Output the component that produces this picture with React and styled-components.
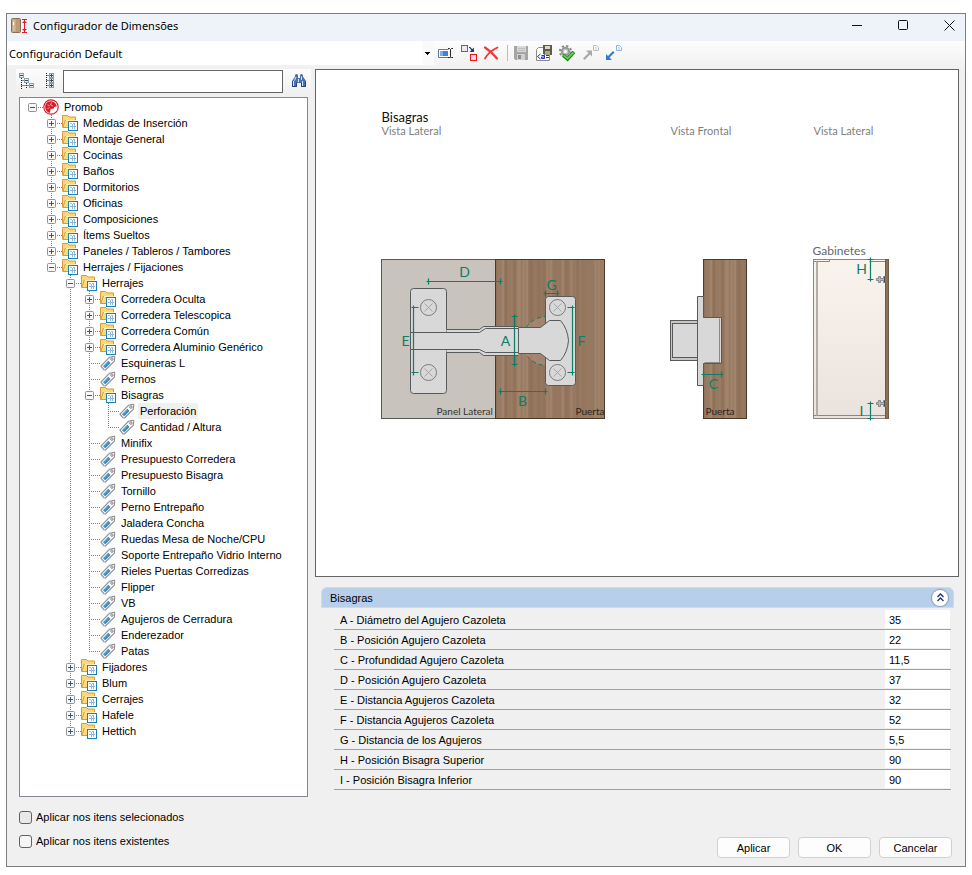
import React, { useState } from 'react'
import styled, { createGlobalStyle } from 'styled-components'

const tree = {
    name: 'Promob', icon: 'root', open: true, children: [
        { name: 'Medidas de Inserción', children: [] },
        { name: 'Montaje General', children: [] },
        { name: 'Cocinas', children: [] },
        { name: 'Baños', children: [] },
        { name: 'Dormitorios', children: [] },
        { name: 'Oficinas', children: [] },
        { name: 'Composiciones', children: [] },
        { name: 'Ítems Sueltos', children: [] },
        { name: 'Paneles / Tableros / Tambores', children: [] },
        {
            name: 'Herrajes / Fijaciones', open: true, children: [
                {
                    name: 'Herrajes', open: true, children: [
                        { name: 'Corredera Oculta', children: [] },
                        { name: 'Corredera Telescopica', children: [] },
                        { name: 'Corredera Común', children: [] },
                        { name: 'Corredera Aluminio Genérico', children: [] },
                        { name: 'Esquineras L' },
                        { name: 'Pernos' },
                        {
                            name: 'Bisagras', open: true, children: [
                                { name: 'Perforación' },
                                { name: 'Cantidad / Altura' },
                            ]
                        },
                        { name: 'Minifix' },
                        { name: 'Presupuesto Corredera' },
                        { name: 'Presupuesto Bisagra' },
                        { name: 'Tornillo' },
                        { name: 'Perno Entrepaño' },
                        { name: 'Jaladera Concha' },
                        { name: 'Ruedas Mesa de Noche/CPU' },
                        { name: 'Soporte Entrepaño Vidrio Interno' },
                        { name: 'Rieles Puertas Corredizas' },
                        { name: 'Flipper' },
                        { name: 'VB' },
                        { name: 'Agujeros de Cerradura' },
                        { name: 'Enderezador' },
                        { name: 'Patas' },
                    ]
                },
                { name: 'Fijadores', children: [] },
                { name: 'Blum', children: [] },
                { name: 'Cerrajes', children: [] },
                { name: 'Hafele', children: [] },
                { name: 'Hettich', children: [] },
            ]
        },
    ]
}

const properties = [
    ['A - Diámetro del Agujero Cazoleta', '35'],
    ['B - Posición Agujero Cazoleta', '22'],
    ['C - Profundidad Agujero Cazoleta', '11,5'],
    ['D - Posición Agujero Cazoleta', '37'],
    ['E - Distancia Agujeros Cazoleta', '32'],
    ['F - Distancia Agujeros Cazoleta', '52'],
    ['G - Distancia de los Agujeros', '5,5'],
    ['H - Posición Bisagra Superior', '90'],
    ['I - Posición Bisagra Inferior', '90'],
]

/* ---------- icons ---------- */

const Icon = ({ children, size = 16 }) => (
    <svg width={size} height={size} viewBox='0 0 16 16' aria-hidden='true'>{children}</svg>
)

const AppIcon = () => (
    <Icon>
        <rect x='.5' y='.5' width='9' height='14' rx='1' fill='#b99b76' stroke='#8a7050' />
        <rect x='1.500' y='1.500' width='3' height='12' fill='#d3bb9c' />
        <rect x='2' y='4' width='1' height='3' fill='#fff' />
        <path d='M11 1.500h5M11 14.500h5M13.500 1v14M11.500 4.500h4M11.500 11.500h4' fill='none' stroke='#e0182d' />
        <path d='M13.500 2l-1.500 2.500h3zM13.500 14l-1.500-2.500h3z' fill='#e0182d' />
    </Icon>
)

const PromobIcon = () => (
    <Icon>
        <circle cx='8' cy='8' r='7.200' fill='#fff' stroke='#d5202c' strokeWidth='1.200' />
        <path d='M7.500 2.200C4 2.300 2 5 2.200 8.200 2.400 11.500 5 13.700 7 13.800l.600-3.800 2.900-.300.800-1.700 2.400-.500C13.500 4.500 11 2.200 7.500 2.200z' fill='#d5202c' />
        <path d='M8.500 3.500l-1 2.500 2.500 1M4.500 6l2 .500M4.500 9.500l2-1' fill='none' stroke='#f6b8bb' strokeWidth='.800' />
    </Icon>
)

const FolderIcon = () => (
    <Icon>
        <path d='M.500 12.500v-12h5l1.500 1.500h6.500v10.500z' fill='#fbd878' stroke='#d59a3c' />
        <path d='M1.500 11.500L4 5.500h10' fill='none' stroke='#fff0b8' />
        <path d='M1 12l2.500-7' stroke='#d59a3c' />
        <rect x='6' y='6' width='10' height='10' fill='#1b7fb5' />
        <rect x='7' y='7' width='8' height='8' fill='#fff' />
        <path d='M8 8.500h2M11 8.500h2' stroke='#f0b445' />
        <path d='M8 11.500h6M10.500 9v5M12.500 9v5' stroke='#8fb9dd' />
    </Icon>
)

const TagIcon = () => (
    <Icon>
        <path d='M.900 11.200L9.600 2.200l4.600-1 .600.600-.600 4.600-8.800 8.600-1.600-.300z' fill='#fafafa' stroke='#8d8d8d' strokeWidth='1.100' strokeLinejoin='round' />
        <path d='M3 11.300l5.300-5.500 2.200 2.200-5.300 5.300z' fill='#2e86c1' />
        <path d='M4.300 11.200l4.200-4.200' stroke='#79bde8' strokeWidth='.900' />
        <circle cx='11.900' cy='4.100' r='1.200' fill='#fff' stroke='#777' strokeWidth='.900' />
    </Icon>
)

const TinyBox = ({ x, y, plus }) => (
    <g transform={`translate(${x} ${y})`}>
        <rect x='.5' y='.5' width='4' height='4' fill='#eaf1f5' stroke='#8ba0ad' />
        <path d={plus ? 'M1 2.500h3M2.500 1v3' : 'M1 2.500h3'} stroke='#33475b' />
    </g>
)

const CollapseIcon = () => (
    <Icon>
        <path d='M2.500 5v11M2.500 7.500h3M7.500 10v5M2.500 12.500h8' fill='none' stroke='#222' strokeDasharray='1 1' />
        <TinyBox x={0} y={0} /><TinyBox x={5} y={5} /><TinyBox x={10} y={10} />
    </Icon>
)

const ExpandIcon = () => (
    <Icon>
        <path d='M4.500 0v15M4.500 2.500h3M4.500 7.500h3M4.500 12.500h3' fill='none' stroke='#222' strokeDasharray='1 1' />
        <TinyBox x={7} y={0} plus /><TinyBox x={7} y={5} plus /><TinyBox x={7} y={10} plus />
    </Icon>
)

const BinocularsIcon = () => (
    <Icon>
        <path d='M4.500 1.500h2l.500 2v1.500h2V3.500l.500-2h2l.500 2 3 4.500v6h-5v-4H6v4H1V8l3-4.500z' fill='#4a72b0' />
        <path d='M2.500 8v5M5 4L3.500 7.500M11.500 8v5M10.500 3.500V7M7.500 6v3' stroke='#d5e3f6' />
        <path d='M1.500 8.500v5h4v-4M14.500 8.500v5h-4v-4M4.500 2h2M9.500 2h2' fill='none' stroke='#24437c' />
    </Icon>
)

const RenameIcon = () => (
    <Icon>
        <path d='M11.500 4.500H1.500v8h12.500' fill='#fff' stroke='#5f7896' />
        <rect x='3' y='6' width='8' height='5' fill='#3f80dd' />
        <rect x='3' y='6' width='3' height='5' fill='#7fadec' />
        <path d='M11 3.500h1.500l1 1 1-1H16M13.500 4.500v7M11 12.500h1.500l1-1 1 1H16' fill='none' stroke='#222' />
    </Icon>
)

const SwapIcon = () => (
    <Icon>
        <rect x='1.500' y='.5' width='6' height='6' fill='#ece8ee' stroke='#6f6672' />
        <rect x='10.500' y='9.500' width='6' height='6' fill='#f6dcdc' stroke='#e81515' />
        <path d='M9 2.500h1l2.500 3' fill='none' stroke='#1c3c78' strokeWidth='1.200' />
        <path d='M14 2.500v4.500H9.500z' fill='#1c3c78' />
    </Icon>
)

const DeleteIcon = () => (
    <Icon>
        <path d='M2 2.500C6 5 10.500 9 14 13.500' fill='none' stroke='#f53333' strokeWidth='2.200' strokeLinecap='round' />
        <path d='M14.500 2.500C9 5 4.500 9 2 13.500' fill='none' stroke='#f53333' strokeWidth='1.800' strokeLinecap='round' />
    </Icon>
)

const SaveIcon = () => (
    <Icon>
        <path d='M1 1h14v14H2.500L1 13.500z' fill='#a5a5a5' />
        <rect x='4' y='1' width='9' height='6' fill='#d9d9d9' />
        <path d='M5 3.500h7M5 5.500h7' stroke='#bcbcbc' />
        <rect x='4' y='9' width='8' height='6' fill='#d0d0d0' />
        <rect x='5' y='10' width='3' height='4' fill='#8f8f8f' />
    </Icon>
)

const SaveAsIcon = () => (
    <Icon>
        <path d='M.500 15.500V4.500l2-2h11v13z' fill='#fdfdfd' stroke='#8c8c8c' />
        <path d='M7 0h9v10H8.500L7 8.500z' fill='#5d5d48' />
        <rect x='9' y='1' width='5' height='3' fill='#d9d9c8' />
        <rect x='9' y='6' width='5' height='4' fill='#a8a890' />
        <path d='M4.500 9L1.500 11.500l3 2.500M5.500 10.500h3v3h-3v-1.500h3M10 10.500h3M10 12.500h3' fill='none' stroke='#1f2fd0' />
    </Icon>
)

const GearCheckIcon = () => (
    <Icon>
        <circle cx='6.500' cy='6.500' r='5.600' fill='none' stroke='#8b8b8b' strokeWidth='2' strokeDasharray='2.200 2.200' />
        <circle cx='6.500' cy='6.500' r='3.700' fill='#c4c4c4' stroke='#979797' strokeWidth='2' />
        <circle cx='6.500' cy='6.500' r='1.500' fill='#fff' />
        <path d='M4 10l4.500 4L15 7' fill='none' stroke='#237a1c' strokeWidth='3.400' />
        <path d='M4.500 10.300l4 3.200 6-6' fill='none' stroke='#59d445' strokeWidth='1.800' />
    </Icon>
)

const ArrowPage = ({ color, page, flip }) => (
    <Icon>
        {flip
            ? <path d='M1 15V9l2 2 5-5 1.500 1.500-5 5L7 15z' fill={color} />
            : <path d='M10 5.500v6L8 9.500l-5.500 5.500L1 13.500 6.500 8l-2.500-2.500z' fill={color} />}
        <path d='M11.500.500h3l2 2v3h-5z' fill='#fff' stroke={page} />
        <path d='M13 2.500h1.500M13 4h2' stroke={page} strokeWidth='.800' />
    </Icon>
)

/* ---------- hinge drawing ---------- */

const GREEN = '#0e7c66'
const EDGE = '#58595b'

// stripes are pseudo random but stable between renders
const Wood = ({ x, y, width, height }) => {
    const tones = ['#846a52', '#a88b6e', '#937660', '#9e8065', '#8b6e57', '#ac9077', '#967a62']
    const stripes = []
    for (let i = 0; i < width; i += 3) {
        stripes.push(
            <rect key={i} x={x + i} y={y} width={Math.min(1 + (i * 7) % 4, width - i)} height={height}
                fill={tones[(i * 5 + (i * i) % 11) % 7]} opacity='.5' />
        )
    }
    return (
        <g>
            <rect x={x} y={y} width={width} height={height} fill='#967860' />
            {stripes}
            <rect x={x} y={y} width={width} height={height} fill='none' stroke='#4a3a2c' />
        </g>
    )
}

const Screw = ({ cx, cy }) => (
    <g>
        <circle cx={cx} cy={cy} r='8' fill='#d8d8d9' stroke='#7b7b7d' />
        <path d={`M${cx - 4} ${cy - 4}l8 8M${cx + 4} ${cy - 4}l-8 8`} stroke='#a6a6a8' />
    </g>
)

const HDim = ({ y, from, to }) => (
    <path d={`M${from - 2} ${y}H${to + 2}M${from} ${y - 3}v6M${to} ${y - 3}v6`} stroke={GREEN} strokeWidth='1.200' />
)

const VDim = ({ x, from, to }) => (
    <path d={`M${x} ${from - 2}V${to + 2}M${x - 3} ${from}h6M${x - 3} ${to}h6`} stroke={GREEN} strokeWidth='1.200' />
)

const SideHinge = ({ y }) => (
    <g>
        <path d={`M876 ${y - 1}h2v-2h2v2h3v-2h2v6h-2v-2h-3v2h-2v-2h-2z`} fill='#b9b9bb' stroke='#77777a' strokeWidth='.8' />
        <path d={`M884 ${y - 3}v6`} stroke='#4f4f51' />
    </g>
)

const HingeDrawing = () => (
    <Drawing viewBox='0 0 642 506' preserveAspectRatio='xMinYMin meet' role='img' aria-label='Bisagras'>
        <g transform='translate(-315.5 -69.5)'>
            <Caption x='381' y='121' size={13} fill='#111'>Bisagras</Caption>
            <Caption x='381' y='134' size={11}>Vista Lateral</Caption>
            <Caption x='670' y='134' size={11}>Vista Frontal</Caption>
            <Caption x='813' y='134' size={11}>Vista Lateral</Caption>

            {/* side view, hinge open over panel and door */}
            <rect x='381' y='259' width='114' height='159' fill='#c8c3bc' stroke={EDGE} />
            <Wood x={495} y={259} width={109} height={159} />
            <circle cx='546' cy='340.500' r='24.500' fill='#b09580' fillOpacity='.5' stroke={GREEN} strokeDasharray='4 3' />
            <rect x='410' y='288' width='36' height='105' rx='3' fill='#d8d8d9' stroke={EDGE} />
            <rect x='545' y='296' width='30' height='89' rx='3' fill='#d8d8d9' stroke={EDGE} />
            <path d='M446 329h33l4-3h35v29h-35l-4-3h-33z' fill='#d8d8d9' />
            <path d='M446 329h33l4-3h35M446 352h33l4 3h35' fill='none' stroke={EDGE} />
            <path d='M518 327h22l9-7h11q7 8 8 20-1 12-8 20h-11l-9-7h-22z' fill='#d8d8d9' stroke={EDGE} />
            <path d='M410 332h69l6-4h33v24h-33l-6-3h-69z' fill='#d8d8d9' stroke={EDGE} />
            <Screw cx={428} cy={307} />
            <Screw cx={428} cy={372} />
            <Screw cx={557} cy={307} />
            <Screw cx={557} cy={372} />
            <HDim y={281} from={428} to={500} />
            <HDim y={293} from={545} to={557} />
            <HDim y={391} from={500} to={545} />
            <VDim x={514} from={316} to={364} />
            <path d='M413 305v70M411 307h7M411 372h7M572 305v70M567 307h7M567 372h7' stroke={GREEN} strokeWidth='1.200' />
            <Letter x='464' y='276'>D</Letter>
            <Letter x='551' y='289'>G</Letter>
            <Letter x='405' y='345'>E</Letter>
            <Letter x='505' y='345'>A</Letter>
            <Letter x='581' y='345'>F</Letter>
            <Letter x='522' y='405'>B</Letter>
            <Caption x='436' y='414' size={10} fill='#333'>Panel Lateral</Caption>
            <Caption x='575' y='414' size={10} fill='#2d2620'>Puerta</Caption>

            {/* front view, cup sunk in the door */}
            <Wood x={703} y={259} width={43} height={159} />
            <rect x='670' y='320' width='28' height='40' fill='#c9c7c0' stroke={EDGE} />
            <rect x='672' y='323' width='26' height='34' fill='#d8d8d9' stroke={EDGE} />
            <path d='M697 296h6v21h18v46h-18v22h-6z' fill='#d8d8d9' stroke={EDGE} />
            <path d='M719 318v44M704 362h16' stroke='#8a8a8c' />
            <HDim y={374} from={703} to={721} />
            <Letter x='713' y='388'>C</Letter>
            <Caption x='705' y='414' size={10} fill='#2d2620'>Puerta</Caption>

            {/* cabinet with both hinges */}
            <Caption x='812' y='254' size={12} fill='#666'>Gabinetes</Caption>
            <defs>
                <linearGradient id='cabinet' x1='0' y1='0' x2='0' y2='1'>
                    <stop offset='0' stopColor='#f9f3ee' />
                    <stop offset='1' stopColor='#eae2dd' />
                </linearGradient>
            </defs>
            <rect x='813' y='259' width='72' height='159' fill='url(#cabinet)' stroke='#8b8680' />
            <path d='M813 261h16v-2M869 261h16M813 415h72' fill='none' stroke='#8b8680' />
            <path d='M816.500 261v154' stroke='#b4ada5' strokeWidth='2' />
            <rect x='885' y='259' width='3' height='159' fill='#8a7257' stroke='#6d5c49' />
            <SideHinge y={279} />
            <SideHinge y={403} />
            <VDim x={870} from={259} to={279} />
            <VDim x={870} from={403} to={418} />
            <Letter x='861' y='273'>H</Letter>
            <Letter x='861' y='415'>I</Letter>
        </g>
    </Drawing>
)

/* ---------- tree ---------- */

const TreeNode = ({ node, depth = 0, trail = [], last = true, selected, onSelect }) => {
    const [open, setOpen] = useState(!!node.open)
    const folder = !!node.children
    const kids = open && folder ? node.children : []
    return (
        <li role='treeitem' aria-expanded={folder ? open : undefined} aria-selected={selected === node.name}>
            <TreeRow>
                {trail.map((line, i) => <Guide key={i} $line={line} />)}
                <Elbow $root={depth === 0} $last={last}>
                    {folder && (
                        <Expander aria-label={open ? 'Contraer' : 'Expandir'} onClick={() => setOpen(!open)}>
                            <svg width='9' height='9' viewBox='0 0 9 9'>
                                <rect x='.5' y='.5' width='8' height='8' rx='1' fill='#f7f7f7' stroke='#919191' />
                                <path d={open ? 'M2 4.500h5' : 'M2 4.500h5M4.500 2v5'} stroke='#33509a' />
                            </svg>
                        </Expander>
                    )}
                </Elbow>
                <NodeIcon>
                    {node.icon === 'root' ? <PromobIcon /> : folder ? <FolderIcon /> : <TagIcon />}
                </NodeIcon>
                <NodeLabel $selected={selected === node.name} onClick={() => onSelect(node.name)}>{node.name}</NodeLabel>
            </TreeRow>
            {kids.length > 0 && (
                <TreeList role='group'>
                    {kids.map((kid, i) => (
                        <TreeNode key={kid.name} node={kid} depth={depth + 1} trail={[...trail, !last]}
                            last={i === kids.length - 1} selected={selected} onSelect={onSelect} />
                    ))}
                </TreeList>
            )}
        </li>
    )
}

const App = () => {
    const [selected, setSelected] = useState('Perforación')
    const [collapsed, setCollapsed] = useState(false)

    return (
        <>
            <GlobalStyle />
            <Window>
                <TitleBar>
                    <AppIcon />
                    <Title>Configurador de Dimensões</Title>
                    <WindowButton aria-label='Minimizar'>
                        <svg width='11' height='11'><path d='M0 5.500h10' stroke='#111' /></svg>
                    </WindowButton>
                    <WindowButton aria-label='Maximizar'>
                        <svg width='11' height='11'><rect x='.5' y='.5' width='9' height='9' rx='1' fill='none' stroke='#111' /></svg>
                    </WindowButton>
                    <WindowButton aria-label='Cerrar'>
                        <svg width='11' height='11'><path d='M.500.500l10 10M10.500.500l-10 10' stroke='#111' /></svg>
                    </WindowButton>
                </TitleBar>

                <Toolbar>
                    <ConfigSelect aria-label='Configuración'>
                        <option>Configuración Default</option>
                    </ConfigSelect>
                    <ToolButton aria-label='Renombrar'><RenameIcon /></ToolButton>
                    <ToolButton aria-label='Duplicar'><SwapIcon /></ToolButton>
                    <ToolButton aria-label='Eliminar'><DeleteIcon /></ToolButton>
                    <Separator />
                    <ToolButton aria-label='Guardar' disabled><SaveIcon /></ToolButton>
                    <ToolButton aria-label='Guardar como'><SaveAsIcon /></ToolButton>
                    <ToolButton aria-label='Validar'><GearCheckIcon /></ToolButton>
                    <ToolButton aria-label='Exportar' disabled><ArrowPage color='#a8a8a8' page='#bdbdbd' /></ToolButton>
                    <ToolButton aria-label='Importar'><ArrowPage color='#3579cf' page='#8ab4e6' flip /></ToolButton>
                </Toolbar>

                <Content>
                    <Sidebar>
                        <SearchBar>
                            <ToolButton aria-label='Contraer todo'><CollapseIcon /></ToolButton>
                            <ToolButton aria-label='Expandir todo'><ExpandIcon /></ToolButton>
                            <SearchInput type='text' aria-label='Buscar' />
                            <ToolButton aria-label='Buscar'><BinocularsIcon /></ToolButton>
                        </SearchBar>
                        <TreeBox>
                            <TreeList role='tree'>
                                <TreeNode node={tree} selected={selected} onSelect={setSelected} />
                            </TreeList>
                        </TreeBox>
                    </Sidebar>

                    <Details>
                        <Canvas>
                            <HingeDrawing />
                        </Canvas>
                        <Group>
                            <GroupHeader>
                                <GroupTitle>Bisagras</GroupTitle>
                                <CollapseButton aria-label='Contraer grupo' onClick={() => setCollapsed(!collapsed)}>
                                    <svg width='9' height='9' viewBox='0 0 9 9'>
                                        <path d='M1.500 4l3-3 3 3M1.500 8l3-3 3 3' fill='none' stroke='#1f2f6b' strokeWidth='1.300' />
                                    </svg>
                                </CollapseButton>
                            </GroupHeader>
                            {!collapsed && (
                                <PropertyTable>
                                    <tbody>
                                        {properties.map(([label, value], i) => (
                                            <PropertyRow key={label}>
                                                <th scope='row'><label htmlFor={'prop-' + i}>{label}</label></th>
                                                <td><ValueInput id={'prop-' + i} defaultValue={value} /></td>
                                            </PropertyRow>
                                        ))}
                                    </tbody>
                                </PropertyTable>
                            )}
                        </Group>
                    </Details>
                </Content>

                <Footer>
                    <Checks>
                        <CheckLabel $dim><input type='checkbox' />Aplicar nos itens selecionados</CheckLabel>
                        <CheckLabel><input type='checkbox' />Aplicar nos itens existentes</CheckLabel>
                    </Checks>
                    <Actions>
                        <ActionButton>Aplicar</ActionButton>
                        <ActionButton>OK</ActionButton>
                        <ActionButton>Cancelar</ActionButton>
                    </Actions>
                </Footer>
            </Window>
        </>
    )
}

const GlobalStyle = createGlobalStyle`
    * {
        box-sizing: border-box;
    }
    body {
        margin: 0;
        padding: 13px 6px 8px;
        background: #ffffff;
        color: #000000;
        font: 11px/14px "Liberation Sans", Arial, sans-serif;
    }
    button, input, select {
        font: inherit;
        color: inherit;
    }
    svg {
        display: block;
        flex: none;
        overflow: visible;
    }
`;

const Window = styled.div`
    display: flex;
    flex-direction: column;
    min-height: calc(100vh - 21px);
    background: #f0f0f0;
    border: 1px solid #7c7f82;
`;

const TitleBar = styled.header`
    display: flex;
    align-items: center;
    height: 27px;
    padding-left: 4px;
    padding-bottom: 4px;
    background: #eef3f9;
`;

const Title = styled.h1`
    flex: 1;
    margin: 0 0 0 6px;
    font: 400 11px/16px "Noto Sans", sans-serif;
`;

const PlainButton = styled.button`
    display: flex;
    align-items: center;
    justify-content: center;
    padding: 0;
    border: none;
    background: none;
`;

const WindowButton = styled(PlainButton)`
    width: 32px;
    height: 22px;
    & + & {
        margin-left: 14px;
    }
`;

const Toolbar = styled.div`
    display: flex;
    align-items: center;
    height: 28px;
    padding-bottom: 4px;
    background: linear-gradient(#fdfdfd, #f0f0f0);
`;

const ConfigSelect = styled.select`
    width: 427px;
    height: 24px;
    padding: 1px 0 0 2px;
    border: none;
    border-radius: 0;
    appearance: none;
    font: 11px/16px "Noto Sans", sans-serif;
    background:
        linear-gradient(#000, #000) 418px 11px / 5px 1px no-repeat,
        linear-gradient(#000, #000) 419px 12px / 3px 1px no-repeat,
        linear-gradient(#000, #000) 420px 13px / 1px 1px no-repeat,
        linear-gradient(#fafafa, #fafafa) 415px 0 / 12px 24px no-repeat,
        #ffffff;
`;

const ToolButton = styled(PlainButton)`
    flex: none;
    justify-content: flex-start;
    width: 23px;
    height: 24px;
    padding-left: 3px;
`;

const Separator = styled.span`
    width: 1px;
    height: 16px;
    margin: 0 2px 0 4px;
    background: #bdbdbd;
`;

const Content = styled.main`
    flex: 1;
    display: flex;
    gap: 4px;
    padding: 0 6px 0 9px;
`;

const Sidebar = styled.section`
    display: flex;
    flex-direction: column;
    gap: 4px;
    width: 295px;
`;

const SearchBar = styled.div`
    display: flex;
    align-items: center;
    height: 24px;
    background: linear-gradient(#fcfcfc, #f0f0f0);
`;

const SearchInput = styled.input`
    flex: 1;
    min-width: 0;
    height: 23px;
    margin: 0 5px 0 1px;
    padding: 0 4px;
    border: 1px solid #646464;
    background: #ffffff;
`;

const TreeBox = styled.div`
    flex: 1;
    margin: 0 3px;
    padding: 1px 3px;
    border: 1px solid #828790;
    background: #ffffff;
`;

const TreeList = styled.ul`
    margin: 0;
    padding: 0;
    list-style: none;
`;

const TreeRow = styled.div`
    display: flex;
    height: 16px;
`;

const Guide = styled.span`
    width: 19px;
    background: repeating-linear-gradient(${({ $line }) => ($line ? '#808080' : 'transparent')} 0 1px, transparent 1px 2px) 9px 0 / 1px 100% no-repeat;
`;

const Elbow = styled.span`
    display: flex;
    align-items: center;
    padding-left: 5px;
    width: 20px;
    background:
        repeating-linear-gradient(90deg, #808080 0 1px, transparent 1px 2px) 9px 8px / 11px 1px no-repeat,
        repeating-linear-gradient(#808080 0 1px, transparent 1px 2px) 9px 0 / 1px ${({ $root, $last }) => ($root ? '0' : $last ? '8px' : '100%')} no-repeat;
`;

const Expander = styled(PlainButton)`
    width: 9px;
    height: 9px;
`;

const NodeIcon = styled.span`
    width: 16px;
    margin-right: 3px;
`;

const NodeLabel = styled.button`
    padding: 0 2px;
    border: none;
    line-height: 16px;
    white-space: nowrap;
    background: ${({ $selected }) => ($selected ? '#f0f0f0' : 'none')};
`;

const Details = styled.section`
    flex: 1;
    min-width: 0;
    display: flex;
    flex-direction: column;
    gap: 10px;
    padding-bottom: 7px;
`;

const Canvas = styled.div`
    flex: 1;
    border: 1px solid #646464;
    background: #ffffff;
`;

const Drawing = styled.svg`
    width: 100%;
    height: auto;
`;

const Caption = styled.text`
    font-family: Lato, sans-serif;
    font-size: ${({ size }) => size}px;
    fill: ${({ fill }) => fill || '#808080'};
`;

const Letter = styled.text`
    font-family: Lato, sans-serif;
    font-size: 14px;
    text-anchor: middle;
    fill: ${GREEN};
`;

const Group = styled.div`
    padding: 0 5px 0 6px;
`;

const GroupHeader = styled.div`
    display: flex;
    align-items: center;
    justify-content: space-between;
    height: 21px;
    padding: 0 5px 0 8px;
    border: 1px solid #c9dcf0;
    border-radius: 6px 6px 0 0;
    background: #b8cfea;
`;

const GroupTitle = styled.h2`
    margin: 0;
    font-size: 11px;
    font-weight: 400;
`;

const CollapseButton = styled(PlainButton)`
    width: 16px;
    height: 16px;
    border-radius: 50%;
    background: #ffffff;
    box-shadow: 0 0 1px 1px #8e9bb0;
`;

const PropertyTable = styled.table`
    width: calc(100% - 16px);
    margin: 2px 3px 0 13px;
    border-collapse: separate;
    border-spacing: 0;
`;

const PropertyRow = styled.tr`
    th, td {
        height: 20px;
        padding: 0;
        border-bottom: 1px solid #a0a0a0;
    }
    th {
        padding-left: 6px;
        text-align: left;
        font-weight: 400;
    }
    td {
        width: 66px;
    }
`;

const ValueInput = styled.input`
    display: block;
    width: 65px;
    height: 18px;
    margin-bottom: 1px;
    padding: 1px 4px 0;
    border: none;
    background: #ffffff;
`;

const Footer = styled.footer`
    display: flex;
    align-items: flex-end;
    justify-content: space-between;
    padding: 13px 13px 8px 12px;
`;

const Checks = styled.div`
    display: flex;
    flex-direction: column;
    gap: 10px;
    padding-bottom: 10px;
`;

const CheckLabel = styled.label`
    display: flex;
    align-items: center;
    gap: 4px;
    height: 14px;
    input {
        appearance: none;
        width: 13px;
        height: 13px;
        margin: 0;
        border: 1px solid #626262;
        border-radius: 3px;
        background: ${({ $dim }) => ($dim ? '#e9e9e9' : '#f5f5f5')};
    }
`;

const Actions = styled.div`
    display: flex;
    gap: 8px;
`;

const ActionButton = styled.button`
    width: 73px;
    height: 21px;
    padding: 0;
    border: 1px solid #d0d0d0;
    border-radius: 4px;
    background: #fdfdfd;
`;

export default App
